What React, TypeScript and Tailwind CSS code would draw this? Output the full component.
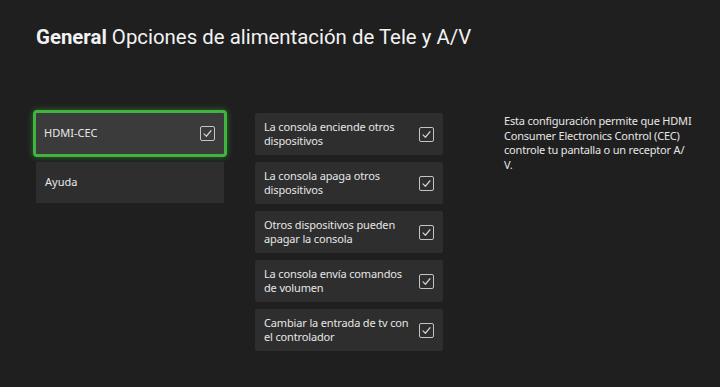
import React from "react";

const Check = () => (
  <div className="w-[15px] h-[15px] shrink-0 rounded-[2px] border-[1.5px] border-[#c4c4c4] flex items-center justify-center">
    <svg width="11" height="11" viewBox="0 0 12 12" fill="none">
      <path d="M2.2 6.4 L4.8 9 L9.8 3" stroke="#d0d0d0" strokeWidth="1.3" strokeLinecap="round" strokeLinejoin="round" />
    </svg>
  </div>
);

const items = [
  ["La consola enciende otros", "dispositivos"],
  ["La consola apaga otros", "dispositivos"],
  ["Otros dispositivos pueden", "apagar la consola"],
  ["La consola envía comandos", "de volumen"],
  ["Cambiar la entrada de tv con", "el controlador"],
];

export default function App() {
  return (
    <div
      className="w-[720px] h-[387px] bg-[#1f1f1f] text-[#e6e6e6] overflow-hidden"
      style={{ fontFamily: '"Noto Sans", "Open Sans", sans-serif' }}
    >
      <div
        className="pt-[23px] pl-[36px] text-[20.4px] leading-[28px] text-[#f2f2f2]"
        style={{ fontFamily: 'Roboto, "Noto Sans", sans-serif' }}
      >
        <span className="font-bold">General</span> Opciones de alimentación de Tele y A/V
      </div>
      <div className="flex items-start mt-[59px] pl-[33px]">
        <div className="w-[194px] flex flex-col gap-[5px]">
          <div className="h-[47px] rounded-[4px] border-[3px] border-[#3fb53f] bg-[#3b3b3b] shadow-[0_0_6px_rgba(60,180,60,0.55)] flex items-center justify-between pl-[8px] pr-[9px]">
            <span className="text-[11px] text-[#e8e8e8]">HDMI-CEC</span>
            <Check />
          </div>
          <div className="ml-[3px] w-[188px] h-[41px] bg-[#2e2e2e] flex items-center pl-[9px]">
            <span className="text-[11px] text-[#e8e8e8]">Ayuda</span>
          </div>
        </div>
        <div className="ml-[28px] mt-[3px] w-[188px] flex flex-col gap-[7px]">
          {items.map(([a, b]) => (
            <div key={a} className="h-[42px] bg-[#2e2e2e] rounded-[2px] flex items-center justify-between pl-[9px] pr-[9px]">
              <div className="text-[11px] leading-[14.5px] tracking-[-0.15px] text-[#e6e6e6]">
                <div>{a}</div>
                <div>{b}</div>
              </div>
              <Check />
            </div>
          ))}
        </div>
        <div className="ml-[61px] mt-[4px] w-[190px] text-[11px] leading-[14.5px] tracking-[-0.2px] text-[#e6e6e6]">
          Esta configuración permite que HDMI Consumer Electronics Control (CEC) controle tu pantalla o un receptor A/
          <br />
          V.
        </div>
      </div>
    </div>
  );
}
